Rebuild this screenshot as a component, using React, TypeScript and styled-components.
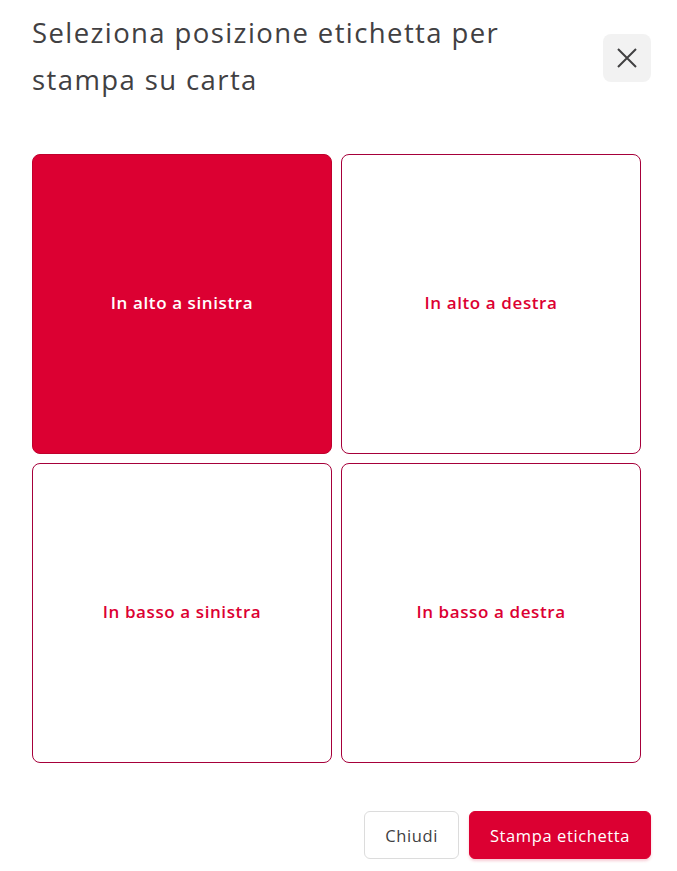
import React, { useState } from 'react'
import styled, { createGlobalStyle } from 'styled-components'

const GlobalStyle = createGlobalStyle`
  html, body {
    margin: 0;
    padding: 0;
    background: #ffffff;
    font-family: "Open Sans", "Liberation Sans", sans-serif;
  }
`

const Dialog = styled.div`
  width: 677px;
  height: 871px;
  box-sizing: border-box;
  padding: 9px 26px 12px 32px;
  display: flex;
  flex-direction: column;
`

const Header = styled.div`
  display: flex;
  justify-content: space-between;
  align-items: flex-start;
`

const Title = styled.h2`
  margin: 0;
  width: 500px;
  font-size: 27.5px;
  font-weight: 400;
  line-height: 47px;
  color: #414042;
  letter-spacing: 1.4px;
`

const CloseButton = styled.button`
  width: 48px;
  height: 48px;
  margin-top: 25px;
  border: none;
  border-radius: 8px;
  background: #f2f2f2;
  display: flex;
  align-items: center;
  justify-content: center;
  padding: 0;
  cursor: pointer;
`

const Grid = styled.div`
  margin-top: 51px;
  display: grid;
  grid-template-columns: 300px 300px;
  grid-auto-rows: 300px;
  gap: 9px;
`

const Cell = styled.button<{ $active: boolean }>`
  box-sizing: border-box;
  border: 1px solid ${p => (p.$active ? '#c0002d' : '#a6003a')};
  border-radius: 8px;
  background: ${p => (p.$active ? '#dc0032' : '#ffffff')};
  color: ${p => (p.$active ? '#ffffff' : '#dc0032')};
  font-family: "Open Sans", "Liberation Sans", sans-serif;
  font-size: 17px;
  font-weight: 600;
  letter-spacing: 0.6px;
  padding: 0 0 4px;
  cursor: pointer;
`

const Footer = styled.div`
  margin-top: auto;
  display: flex;
  justify-content: flex-end;
  gap: 10px;
`

const Button = styled.button<{ $primary?: boolean }>`
  height: 48px;
  padding: 0 20px;
  border-radius: 6px;
  font-family: "Open Sans", "Liberation Sans", sans-serif;
  font-size: 16.5px;
  font-weight: ${p => (p.$primary ? 500 : 400)};
  letter-spacing: 0.6px;
  border: 1px solid ${p => (p.$primary ? '#dc0032' : '#dcdcdc')};
  background: ${p => (p.$primary ? '#dc0032' : '#ffffff')};
  color: ${p => (p.$primary ? '#ffffff' : '#414042')};
  box-shadow: ${p => (p.$primary ? '0 2px 3px rgba(220,0,50,0.2)' : 'none')};
  cursor: pointer;
`

const positions = [
  'In alto a sinistra',
  'In alto a destra',
  'In basso a sinistra',
  'In basso a destra',
]

export default function App() {
  const [selected, setSelected] = useState(0)
  return (
    <>
      <GlobalStyle />
      <Dialog>
        <Header>
          <Title>Seleziona posizione etichetta per stampa su carta</Title>
          <CloseButton aria-label="Chiudi">
            <svg width="22" height="22" viewBox="0 0 22 22">
              <path d="M2 2 L20 20 M20 2 L2 20" stroke="#414042" strokeWidth="2" fill="none" />
            </svg>
          </CloseButton>
        </Header>
        <Grid>
          {positions.map((p, i) => (
            <Cell key={p} $active={selected === i} onClick={() => setSelected(i)}>
              {p}
            </Cell>
          ))}
        </Grid>
        <Footer>
          <Button>Chiudi</Button>
          <Button $primary>Stampa etichetta</Button>
        </Footer>
      </Dialog>
    </>
  )
}
